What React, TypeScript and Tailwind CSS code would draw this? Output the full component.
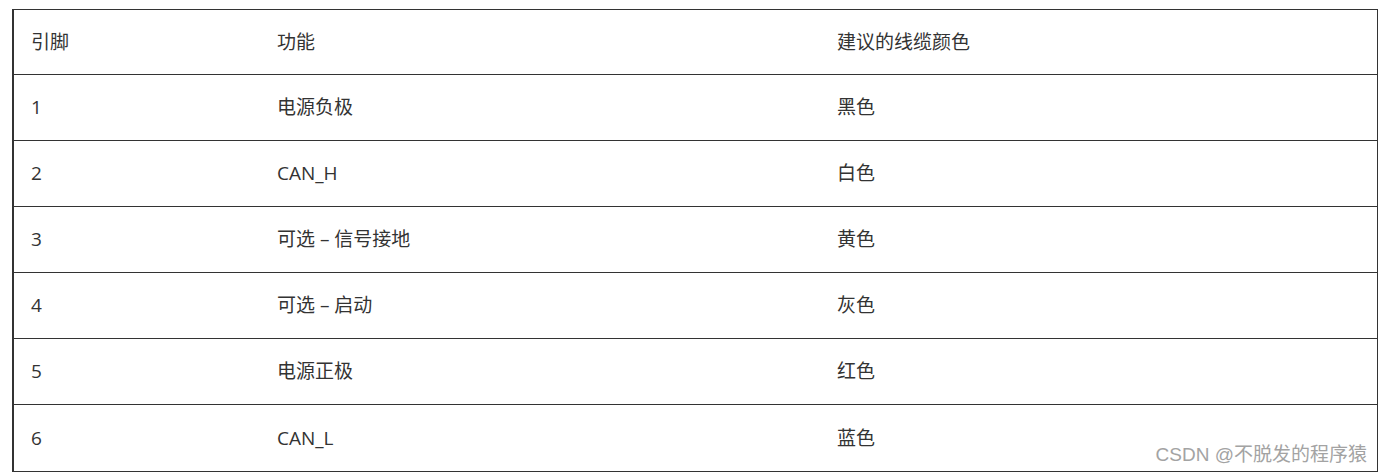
const rows = [
  ["引脚", "功能", "建议的线缆颜色"],
  ["1", "电源负极", "黑色"],
  ["2", "CAN_H", "白色"],
  ["3", "可选 – 信号接地", "黄色"],
  ["4", "可选 – 启动", "灰色"],
  ["5", "电源正极", "红色"],
  ["6", "CAN_L", "蓝色"],
];

export default function App() {
  return (
    <div
      className="relative h-[476px] w-[1383px] bg-white pl-[12px] pt-[9px]"
      style={{ fontFamily: '"Open Sans", "Noto Sans CJK SC", sans-serif' }}
    >
      <div className="flex w-[1366px] flex-col divide-y divide-[#333] border-t border-r border-b border-l-2 border-[#333] text-[19px] text-[#333]">
        {rows.map((r, i) => (
          <div key={i} className={(i === 0 ? "h-[65px]" : "h-[66px]") + " flex items-center pl-[17px]"}>
            <div className="w-[246px]">{r[0]}</div>
            <div className="w-[560px]">{r[1]}</div>
            <div>{r[2]}</div>
          </div>
        ))}
      </div>
      <div
        className="absolute right-[16px] bottom-[7px] text-[19px] text-[#a3a3a3]"
        style={{ fontFamily: '"Liberation Sans", "Noto Sans CJK SC", sans-serif' }}
      >
        CSDN @不脱发的程序猿
      </div>
    </div>
  );
}
